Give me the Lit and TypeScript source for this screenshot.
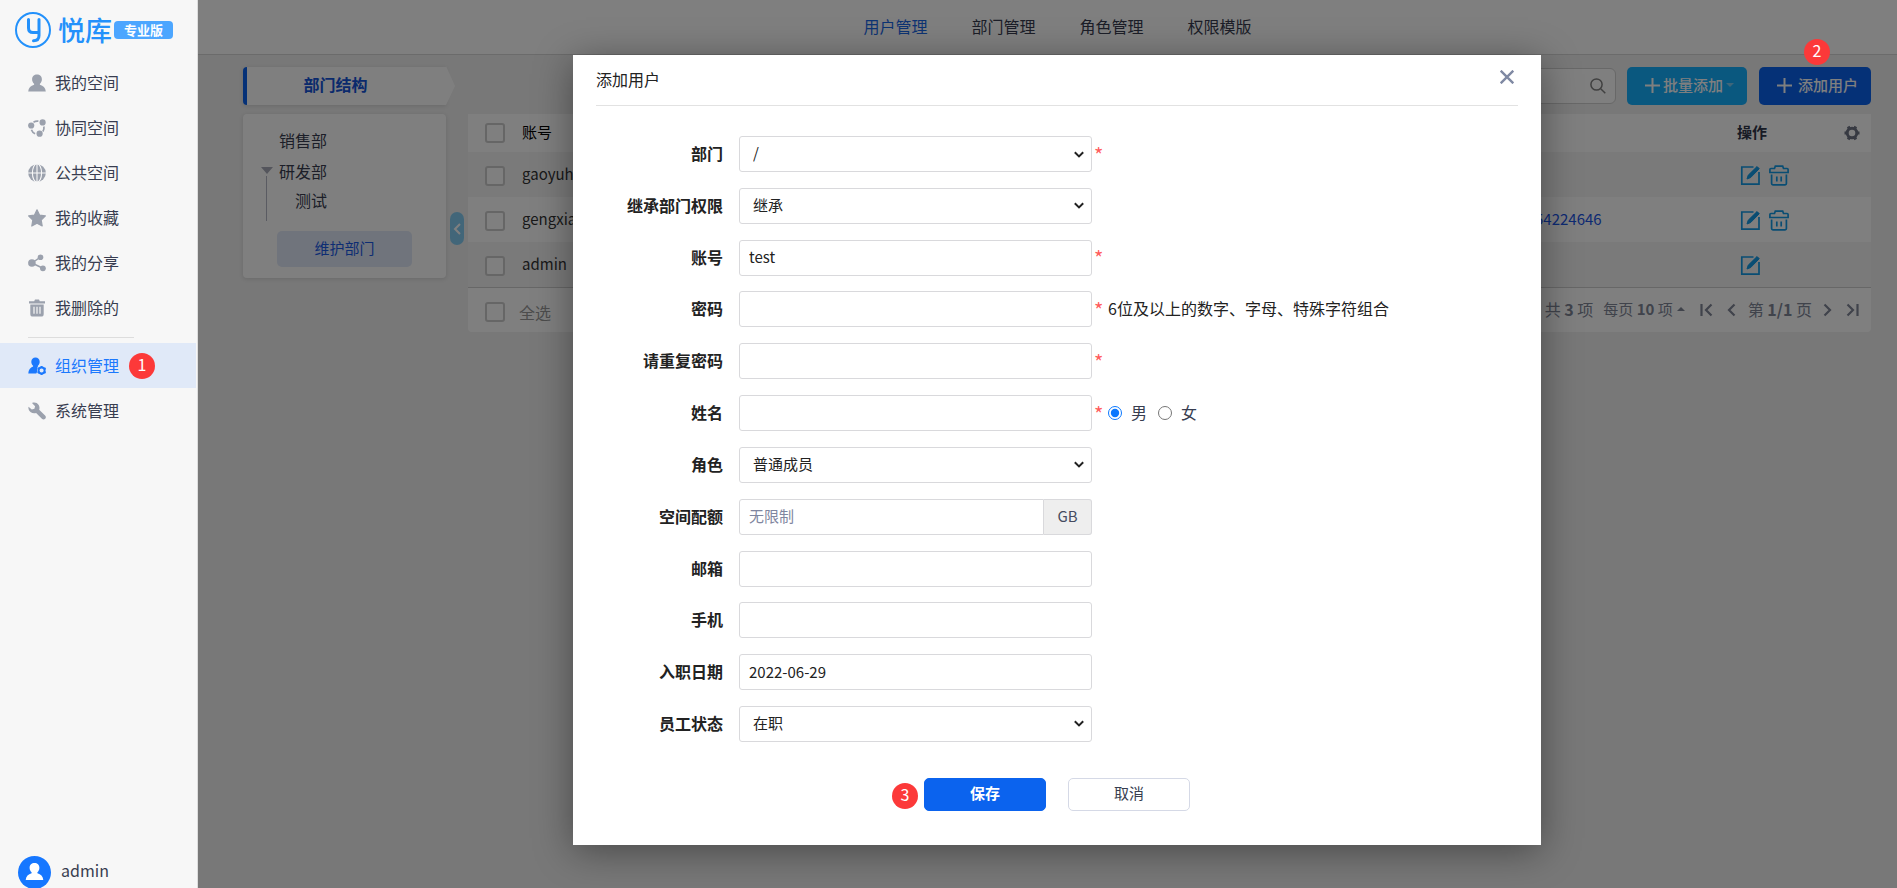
import { LitElement, html, svg, css, nothing, type TemplateResult } from "lit";
import { customElement, state } from "lit/decorators.js";
import { classMap } from "lit/directives/class-map.js";

const icons: Record<string, TemplateResult> = {
  user: svg`<path d="M9 0.5c2.900 0 4.900 2.100 4.900 4.700 0 1.900-.8 3.600-2 4.500v1.100c3.300.9 5.600 3 5.900 6.700H.2c.3-3.700 2.600-5.800 5.900-6.700V9.700c-1.200-.9-2-2.600-2-4.500C4.100 2.600 6.100.5 9 .5z" fill="currentColor"/>`,
  team: svg`<g fill="currentColor"><circle cx="3.200" cy="6.500" r="3.100"/><circle cx="14.600" cy="3.400" r="3.100"/><circle cx="11.600" cy="14.700" r="3.100"/></g><g fill="none" stroke="currentColor" stroke-width="1.700"><path d="M5.500 3.200A7 7 0 0 1 10.400 2.200M15.900 7.500a7 7 0 0 1-1 5M3.400 10.800a7 7 0 0 0 3.700 4"/></g>`,
  globe: svg`<circle cx="9" cy="9" r="8.800" fill="currentColor"/><g fill="none" stroke="#f7f7f7" stroke-width="1.100"><path d="M9 0v18M0 9h18"/><ellipse cx="9" cy="9" rx="4.600" ry="9.200"/></g>`,
  star: svg`<path d="M9 .8l2.500 5.300 5.900.8-4.200 4.200 1 5.900L9 14.300 3.800 17l1-5.900L.6 6.900l5.900-.8z" fill="currentColor" stroke="currentColor" stroke-width="1.200" stroke-linejoin="round"/>`,
  share: svg`<g fill="currentColor"><circle cx="3.900" cy="9" r="3.800"/><circle cx="12.500" cy="3.200" r="2.800"/><circle cx="14.900" cy="14.300" r="2.900"/></g><path d="M3.900 9l8.600-5.800M3.900 9l11 5.300" stroke="currentColor" stroke-width="1.500"/>`,
  trash: svg`<path d="M1 2.200h5.200L7 .6h4l.8 1.600H17v2.200H1z" fill="currentColor"/><path d="M2.300 5.500h13.400V15a2.600 2.600 0 0 1-2.600 2.600H4.900A2.600 2.600 0 0 1 2.300 15z" fill="currentColor"/><path d="M6 7.800v7M9 7.800v7M12 7.800v7" stroke="#f7f7f7" stroke-width="1.200"/>`,
  org: svg`<path d="M7.500.5c2.500 0 4.200 1.900 4.200 4.200 0 1.700-.7 3.200-1.800 4v.9L9 11.400l.3 3-1 2H.3C.4 12.800 2.300 10.800 5.100 9.600v-.9c-1.100-.8-1.800-2.300-1.800-4C3.300 2.400 5 .5 7.500.5z" fill="currentColor"/><circle cx="13.600" cy="13.500" r="3" fill="none" stroke="currentColor" stroke-width="1.900"/><path d="M13.600 8.900v1.700M13.600 16.400v1.700M9.600 11.200l1.500.9M16.100 14.900l1.500.9M9.600 15.800l1.500-.9M16.100 12.100l1.500-.9" stroke="currentColor" stroke-width="2"/>`,
  wrench: svg`<path d="M4 .9C6.400-.1 9.300.6 10.700 2.900c.9 1.500 1 3.200.5 4.800l5.900 5.700c1 1 1 2.400.1 3.400-.9.900-2.400.9-3.300 0L8.100 11C6.400 11.600 4.400 11.400 2.800 10.300.9 9 .1 6.800.5 4.700l3.300 2.800 2.600-.7.7-2.600z" fill="currentColor"/>`,
};

interface NavItem {
  icon: string;
  text: string;
  active?: boolean;
  mark?: number;
}

interface Field {
  id: string;
  label: string;
  kind: "select" | "text" | "password" | "quota";
  value?: string;
  required?: boolean;
  hint?: string;
  gender?: boolean;
}

const spaces: NavItem[] = [
  { icon: "user", text: "我的空间" },
  { icon: "team", text: "协同空间" },
  { icon: "globe", text: "公共空间" },
  { icon: "star", text: "我的收藏" },
  { icon: "share", text: "我的分享" },
  { icon: "trash", text: "我删除的" },
];

const admin: NavItem[] = [
  { icon: "org", text: "组织管理", active: true, mark: 1 },
  { icon: "wrench", text: "系统管理" },
];

const tabs = ["用户管理", "部门管理", "角色管理", "权限模版"];

const users = [
  { name: "gaoyuh", phone: "", removable: true },
  { name: "gengxia", phone: "54224646", removable: true },
  { name: "admin", phone: "", removable: false },
];

const fields: Field[] = [
  { id: "dept", label: "部门", kind: "select", value: "/", required: true },
  { id: "inherit", label: "继承部门权限", kind: "select", value: "继承" },
  { id: "account", label: "账号", kind: "text", value: "test", required: true },
  { id: "pwd", label: "密码", kind: "password", required: true, hint: "6位及以上的数字、字母、特殊字符组合" },
  { id: "pwd2", label: "请重复密码", kind: "password", required: true },
  { id: "fullname", label: "姓名", kind: "text", required: true, gender: true },
  { id: "role", label: "角色", kind: "select", value: "普通成员" },
  { id: "quota", label: "空间配额", kind: "quota" },
  { id: "mail", label: "邮箱", kind: "text" },
  { id: "mobile", label: "手机", kind: "text" },
  { id: "joined", label: "入职日期", kind: "text", value: "2022-06-29" },
  { id: "status", label: "员工状态", kind: "select", value: "在职" },
];

const base = css`
  * { box-sizing: border-box; }
  button, input, select { font: inherit; color: inherit; margin: 0; }
  button { border: 0; background: none; padding: 0; cursor: pointer; }
  a { color: inherit; text-decoration: none; }
  svg { display: block; flex: none; }
  .mark {
    display: flex; align-items: center; justify-content: center;
    width: 26px; height: 26px; padding-bottom: 3px; border-radius: 50%;
    background: #fc3939; color: #fff; font-size: 16px; line-height: 23px;
  }
`;

@customElement("side-bar")
export class SideBar extends LitElement {
  static styles = [base, css`
    :host {
      display: flex; flex-direction: column; position: relative; z-index: 20;
      height: 100vh; overflow: hidden; background: #f7f7f7; border-right: 1px solid #ddd;
      color: #383d50; font-size: 16px; line-height: 24px;
    }
    .brand { display: flex; align-items: center; height: 60px; padding-left: 15px; color: #2391fb; }
    .name { margin-left: 7px; font-size: 27px; line-height: 36px; font-weight: 500; }
    .edition {
      width: 59px; height: 18px; margin-left: 2px; border-radius: 4px; background: #4ca6ff; color: #fff;
      font-size: 13px; font-weight: 700; line-height: 17px; text-align: center;
    }
    .item { display: flex; align-items: center; gap: 9px; height: 45px; margin-right: 1px; padding-left: 28px; }
    .item svg { color: #9ba1ad; }
    .item .mark { margin-left: 1px; }
    .item .text { padding-bottom: 1px; }
    .active { background: #e0e9f8; color: #1b78fd; }
    .active svg { color: #1b78fd; }
    .rule { width: 106px; height: 1px; margin: 7px 0 5px 28px; background: #ddd; }
    .me { display: flex; align-items: flex-start; gap: 10px; height: 32px; margin-top: auto; padding-left: 18px; line-height: 29px; }
  `];

  private item = (n: NavItem) => html`
    <a class=${classMap({ item: true, active: !!n.active })} href="#">
      <svg width="18" height="18" viewBox="0 0 18 18" aria-hidden="true">${icons[n.icon]}</svg>
      <span class="text">${n.text}</span>
      ${n.mark ? html`<span class="mark">${n.mark}</span>` : nothing}
    </a>`;

  render() {
    return html`
      <div class="brand">
        <svg width="36" height="36" viewBox="0 0 36 36" aria-hidden="true">
          <circle cx="18" cy="18" r="17" fill="none" stroke="#2391fb" stroke-width="2"/>
          <path d="M13.500 7.500v8.500q0 4.500 4.500 4.500h5.500M24 7.500v16q0 5.300-5.500 5.300" fill="none" stroke="#2391fb" stroke-width="3" stroke-linecap="round"/>
        </svg>
        <span class="name">悦库</span><span class="edition">专业版</span>
      </div>
      <nav>
        ${spaces.map(this.item)}
        <div class="rule"></div>
        ${admin.map(this.item)}
      </nav>
      <div class="me">
        <svg width="33" height="33" viewBox="0 0 33 33" aria-hidden="true">
          <circle cx="16.500" cy="16.500" r="16.500" fill="#1677ff"/>
          <g transform="translate(7.500 6.500)" color="#fff">${icons.user}</g>
        </svg>
        <span>admin</span>
      </div>`;
  }
}

@customElement("user-board")
export class UserBoard extends LitElement {
  static styles = [base, css`
    :host { display: block; color: #383d50; font-size: 16px; line-height: 24px; }
    .tabs {
      display: flex; justify-content: center; gap: 44px; height: 55px; padding: 14px 0 0 20px;
      background: #fff; border-bottom: 1px solid #d6d6d6;
    }
    .on { color: #1b68e6; }
    .page { display: grid; grid-template-columns: 203px 22px minmax(0, 1fr); row-gap: 9px; padding: 12px 26px 0 45px; }
    .title {
      position: relative; height: 38px; border-left: 4px solid #0b63ee; border-radius: 4px 0 0 4px; background: #fff;
      box-shadow: 0 1px 4px rgba(0, 0, 0, .12); padding-right: 22px; color: #1555d8; font-weight: 700; line-height: 34px; text-align: center;
    }
    .title::after {
      content: ""; position: absolute; left: 100%; top: -1px; border: solid transparent;
      border-width: 20px 0 19px 9px; border-left-color: #fff;
    }
    .tools { grid-column: 3; display: flex; justify-content: flex-end; align-items: center; }
    .search {
      display: flex; align-items: center; width: 260px; height: 36px; margin-right: 11px; padding-right: 9px;
      background: #fff; border: 1px solid #d0d0d0; border-radius: 6px; color: #808080;
    }
    .search input { flex: 1; min-width: 0; border: 0; background: none; outline: 0; }
    .btn { display: flex; align-items: center; height: 38px; padding: 0 0 2px 18px; border-radius: 5px; color: #fff; font-size: 15px; font-weight: 500; }
    .batch { width: 120px; gap: 3px; margin-right: 12px; background: #14b0ff; }
    .add { width: 112px; gap: 6px; background: #0b63ee; }
    .tri { flex: none; width: 8px; border: solid transparent; border-width: 4px 4px 0; border-top-color: currentColor; }
    .batch .tri { color: #7fcdf5; }
    .tri.up { border-width: 0 4px 4px; border-bottom-color: currentColor; }
    .card { height: 164px; padding: 11px 34px 12px 18px; background: #fff; border-radius: 4px; box-shadow: 0 1px 4px rgba(0, 0, 0, .12); }
    .tree, .tree ul { list-style: none; margin: 0; padding: 0; }
    .tree li { display: grid; grid-template-columns: 18px 1fr; line-height: 31px; }
    .tree .fold { margin-top: 11px; border-width: 7px 6px 0; width: 12px; color: #a8abb8; }
    .tree ul { grid-column: 1 / -1; height: 45px; margin: -11px 0 0 5px; border-left: 1px solid #b4b7c4; }
    .tree ul li { display: block; padding: 10px 0 0 28px; line-height: 28px; }
    .keep { display: block; width: 135px; height: 36px; margin: 10px 0 0 16px; padding-bottom: 2px; border-radius: 5px; background: #e0e9f8; color: #1b5be6; font-size: 15px; line-height: 32px; }
    .shrink { display: flex; align-items: center; justify-content: center; width: 14px; height: 33px; margin: 98px 0 0 4px; border-radius: 7px; background: #85cdf3; color: #fff; }
    .list { align-self: start; background: #fff; border-radius: 0 0 4px 4px; }
    table { width: 100%; table-layout: fixed; border-collapse: collapse; font-size: 15px; color: #333; }
    th, td { padding: 0 0 1px; text-align: left; }
    th { height: 38px; padding-bottom: 3px; color: #000; font-weight: 400; }
    th .bold { font-weight: 700; color: #30364a; }
    td { height: 45px; }
    tbody tr:nth-child(odd) { background: #f5f5f5; }
    .c-check { width: 54px; padding-left: 17px; }
    .c-phone { width: 202px; color: #1b55e6; }
    .c-ops { width: 90px; }
    .c-gear { width: 44px; }
    .tick { appearance: none; display: block; width: 20px; height: 20px; border: 2px solid #ccc; border-radius: 3px; background: #fff; }
    tr .tick { margin-top: 3px; }
    .gear { color: #6f7485; display: block; margin: 3px 0 0 17px; }
    .ops { display: flex; gap: 8px; padding: 2px 0 0 3px; color: #139be6; }
    .foot { display: flex; align-items: center; height: 45px; padding: 0 12px 0 17px; border-top: 1px solid #cfcfcf; color: #808697; }
    .all { display: flex; align-items: center; gap: 14px; margin-right: auto; padding-top: 4px; }
    .all span { color: #999; padding-bottom: 1px; }
    .pager { display: flex; align-items: center; padding-bottom: 2px; }
    .size { display: flex; align-items: center; gap: 4px; margin: 0 15px 0 10px; font-size: 15px; }
    .pager button { padding-top: 2px; }
    .pager .prev { margin: 0 12px 0 14px; }
    .pager .next { margin: 0 14px 0 11px; }
  `];

  private edit = () => html`
    <button aria-label="编辑"><svg width="21" height="21" viewBox="0 0 21 21" fill="none" stroke="currentColor" stroke-width="1.700">
      <path d="M13.500 2H1.800v17.200h17.200V7"/>
      <path d="M7 14l1.200-3.800L17 1.600l2.200 2.200-8.600 8.800zM8.500 10.800l9-8.700 1.500 1.500-9 8.700z" stroke-width="1" fill="currentColor"/>
    </svg></button>`;

  private remove = () => html`
    <button aria-label="删除"><svg width="20" height="21" viewBox="0 0 20 21" fill="none" stroke="currentColor" stroke-width="1.700">
      <path d="M.9 4.500q0-1 1-1h3.600l.8-2.300h7.400l.8 2.300h3.600q1 0 1 1v3H.9zM2.600 9.500v9q0 1.300 1.300 1.300h12.200q1.300 0 1.300-1.300v-9"/>
      <path d="M7.800 11.500v5M12.200 11.500v5"/>
    </svg></button>`;

  private arrow = (cls: string, d: string, w: number, label: string) => html`
    <button class=${cls} aria-label=${label}><svg width=${w} height="14" viewBox="0 0 ${w} 14" fill="none" stroke="currentColor" stroke-width="2.200"><path d=${d}/></svg></button>`;

  render() {
    return html`
      <nav class="tabs">${tabs.map((t, i) => html`<a class=${classMap({ on: i === 0 })} href="#">${t}</a>`)}</nav>
      <div class="page">
        <div class="title">部门结构</div>
        <div class="tools">
          <label class="search">
            <input type="search" aria-label="搜索">
            <svg width="16" height="16" viewBox="0 0 16 16" fill="none" stroke="currentColor" stroke-width="1.500"><circle cx="6.500" cy="6.500" r="5.600"/><path d="M10.700 10.700l4.600 4.600"/></svg>
          </label>
          <button class="btn batch">
            <svg width="15" height="15" viewBox="0 0 15 15" stroke="currentColor" stroke-width="2"><path d="M7.500 0v15M0 7.500h15"/></svg>
            <span>批量添加</span><i class="tri"></i>
          </button>
          <button class="btn add">
            <svg width="15" height="15" viewBox="0 0 15 15" stroke="currentColor" stroke-width="2"><path d="M7.500 0v15M0 7.500h15"/></svg>
            <span>添加用户</span>
          </button>
        </div>
        <div class="card">
          <ul class="tree">
            <li><span></span><span>销售部</span></li>
            <li><i class="tri fold"></i><span>研发部</span><ul><li>测试</li></ul></li>
          </ul>
          <button class="keep">维护部门</button>
        </div>
        <div><button class="shrink" aria-label="收起">
          <svg width="8" height="12" viewBox="0 0 8 12" fill="none" stroke="currentColor" stroke-width="2"><path d="M7 1L2 6l5 5"/></svg>
        </button></div>
        <div class="list">
          <table>
            <thead><tr>
              <th class="c-check"><input class="tick" type="checkbox" aria-label="账号"></th>
              <th>账号</th>
              <th class="c-phone"></th>
              <th class="c-ops"><span class="bold">操作</span></th>
              <th class="c-gear"><button class="gear" aria-label="设置">
                <svg width="16" height="16" viewBox="0 0 16 16" fill="none" stroke="currentColor"><circle cx="8" cy="8" r="4.800" stroke-width="3"/><path d="M.5 8H3M13 8h2.500M4.200 1.600l1.200 2.100M10.600 12.300l1.200 2.100M4.200 14.400l1.200-2.100M10.600 3.700l1.200-2.100" stroke-width="3"/></svg>
              </button></th>
            </tr></thead>
            <tbody>
              ${users.map((u) => html`<tr>
                <td class="c-check"><input class="tick" type="checkbox" aria-label=${u.name}></td>
                <td>${u.name}</td>
                <td class="c-phone">${u.phone}</td>
                <td><div class="ops">${this.edit()}${u.removable ? this.remove() : nothing}</div></td>
                <td></td>
              </tr>`)}
            </tbody>
          </table>
          <div class="foot">
            <label class="all"><input class="tick" type="checkbox"><span>全选</span></label>
            <div class="pager">
              <span>共 <b>3</b> 项</span>
              <span class="size"><span>每页 <b>10</b> 项</span><i class="tri up"></i></span>
              ${this.arrow("", "M1.500 1v12M11.500 1.500L6 7l5.500 5.500", 13, "首页")}
              ${this.arrow("prev", "M7.500 1.500L2 7l5.500 5.500", 9, "上一页")}
              <span>第 <b>1/1</b> 页</span>
              ${this.arrow("next", "M1.500 1.500L7 7l-5.500 5.500", 9, "下一页")}
              ${this.arrow("", "M1.500 1.500L7 7l-5.500 5.500M11.500 1v12", 13, "末页")}
            </div>
          </div>
        </div>
      </div>`;
  }
}

@customElement("user-dialog")
export class UserDialog extends LitElement {
  static styles = [base, css`
    :host {
      display: block; width: 968px; max-width: 100%; padding: 0 23px 34px; background: #fff; color: #222;
      box-shadow: 0 6px 36px rgba(0, 0, 0, .4); font-size: 16px; line-height: 24px;
    }
    header { display: flex; justify-content: space-between; height: 51px; padding-top: 12px; border-bottom: 1px solid #e2e2e2; }
    .close { align-self: flex-start; margin: 3px 4px 0 0; color: #7f89a3; }
    form { display: grid; align-content: space-between; min-height: 636px; padding-top: 30px; }
    .row { display: grid; grid-template-columns: 127px 353px 1fr; column-gap: 16px; align-items: center; height: 36px; }
    .label { text-align: right; font-weight: 700; padding-bottom: 2px; }
    .box { width: 353px; height: 36px; padding: 0 9px 2px; border: 1px solid #d9d9dc; border-radius: 3px; background: #fff; font-size: 15px; color: #222; outline: 0; }
    select.box {
      appearance: none; padding: 0 24px 2px 13px;
      background: #fff url("data:image/svg+xml,%3Csvg xmlns='http://www.w3.org/2000/svg' width='10' height='7' fill='none' stroke='%23222' stroke-width='2'%3E%3Cpath d='M.8 1.200L5 5.400l4.200-4.200'/%3E%3C/svg%3E") no-repeat right 7px center;
    }
    .group { display: flex; }
    .group .box { flex: 1; width: auto; min-width: 0; border-radius: 3px 0 0 3px; }
    .box::placeholder { color: #7f86a0; opacity: 1; }
    .unit { width: 48px; border: 1px solid #d9d9dc; border-left: 0; border-radius: 0 3px 3px 0; background: #eee; color: #454b60; font-size: 15px; line-height: 31px; text-align: center; }
    .after { display: flex; align-items: center; margin-left: -14px; padding-bottom: 2px; }
    .star { width: 14px; padding-top: 3px; color: #ff5c5c; font-size: 20px; }
    .pick { display: flex; align-items: center; gap: 9px; margin-right: 11px; color: #383d50; }
    .pick input { width: 14px; height: 14px; margin-top: 2px; accent-color: #0b78ff; }
    footer { display: flex; justify-content: center; gap: 22px; margin-top: 36px; }
    .act { position: relative; width: 122px; height: 33px; padding-bottom: 3px; border: 1px solid #d5d9e6; border-radius: 5px; font-size: 15px; line-height: 28px; color: #383d50; }
    .save { border-color: #0b63ee; background: #0b63ee; color: #fff; font-weight: 700; }
    .save .mark { position: absolute; left: -33px; top: 4px; font-weight: 400; }
  `];

  @state() private gender = "男";

  private control(f: Field) {
    if (f.kind === "select") {
      return html`<select class="box" id=${f.id}><option>${f.value}</option></select>`;
    }
    if (f.kind === "quota") {
      return html`<div class="group"><input class="box" id=${f.id} placeholder="无限制"><span class="unit">GB</span></div>`;
    }
    return html`<input class="box" id=${f.id} type=${f.kind} .value=${f.value ?? ""}>`;
  }

  private radio = (g: string) => html`
    <label class="pick"><input type="radio" name="gender" .checked=${this.gender === g} @change=${() => (this.gender = g)}>${g}</label>`;

  render() {
    return html`
      <header>
        <span>添加用户</span>
        <button class="close" aria-label="关闭"><svg width="14" height="14" viewBox="0 0 14 14" stroke="currentColor" stroke-width="2.400"><path d="M.7.7l12.600 12.600M13.300.7L.7 13.300"/></svg></button>
      </header>
      <form>
        ${fields.map((f) => html`
          <div class="row">
            <label class="label" for=${f.id}>${f.label}</label>
            ${this.control(f)}
            <div class="after">
              ${f.required ? html`<span class="star">*</span>` : nothing}
              ${f.hint ? html`<span>${f.hint}</span>` : nothing}
              ${f.gender ? ["男", "女"].map(this.radio) : nothing}
            </div>
          </div>`)}
      </form>
      <footer>
        <button class="act save"><span class="mark">3</span>保存</button>
        <button class="act">取消</button>
      </footer>`;
  }
}

@customElement("app-root")
export class AppRoot extends LitElement {
  static styles = [base, css`
    :host {
      display: grid; grid-template-columns: 198px minmax(0, 1fr); position: relative; height: 100vh; overflow: hidden;
      background: #f0f0f0; font-family: "Noto Sans CJK SC", "Noto Sans", sans-serif;
    }
    .veil {
      position: absolute; inset: 0; z-index: 10; display: flex; justify-content: center; align-items: flex-start;
      padding: 55px 0 0 217px; background: rgba(0, 0, 0, .5);
    }
    .step { position: absolute; right: 67px; top: 39px; z-index: 15; }
  `];

  render() {
    return html`
      <side-bar></side-bar>
      <user-board></user-board>
      <div class="veil"><user-dialog role="dialog" aria-label="添加用户"></user-dialog></div>
      <span class="mark step">2</span>`;
  }
}
